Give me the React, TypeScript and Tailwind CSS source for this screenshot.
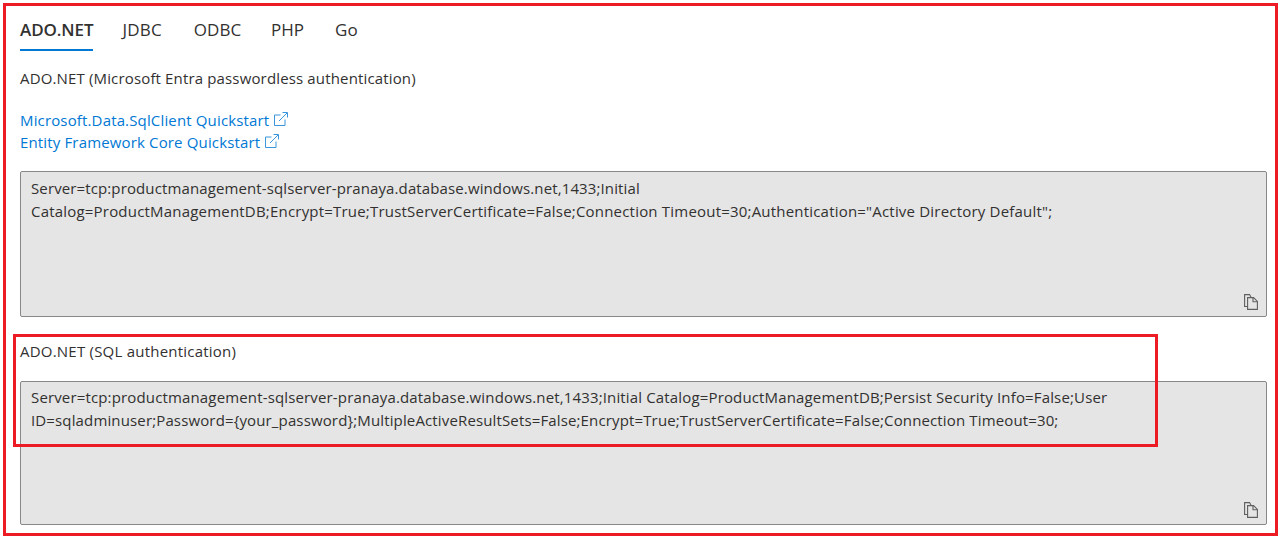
const font = "font-['Open_Sans','Noto_Sans',sans-serif]";

function ExternalIcon() {
  return (
    <svg width="14" height="14" viewBox="0 0 14 14" fill="none" stroke="#3a96dd" strokeWidth="1" className="ml-[5px] mb-[4px] shrink-0">
      <path d="M6.5 3H.5v10.5h10.5V7.5" />
      <path d="M5 9 13 1M8.5.5h5v5" />
    </svg>
  );
}

function CopyIcon() {
  return (
    <svg width="14" height="16" viewBox="0 0 14 16" fill="none" stroke="#5f5f5f" strokeWidth="1.1">
      <path d="M3.6 12.5H.6V.6h5l1.4 2.6" />
      <path d="M3.6 3.6h6l3.8 3.8v8H3.6z" />
      <path d="M9 3.6v4.2h4.4" />
    </svg>
  );
}

function CodeBox({ className, lines }: { className: string; lines: { text: string; tracking: string }[] }) {
  return (
    <div className={`mr-[13px] flex flex-col justify-between rounded-[2px] border border-[#8a8886] bg-[#e5e5e5] pl-[10px] pr-[8px] pb-[6px] ${className}`}>
      <div className="whitespace-nowrap text-[15px] leading-[23px] text-[#323130]">
        {lines.map((l) => (
          <div key={l.text} className={l.tracking}>{l.text}</div>
        ))}
      </div>
      <div className="flex justify-end">
        <CopyIcon />
      </div>
    </div>
  );
}

export default function App() {
  return (
    <div className={`relative h-[537px] w-[1280px] overflow-hidden bg-white ${font} text-[#323130]`}>
      <div className="flex flex-col pl-[20px] pt-[18px]">
        <div className="flex h-[33px] text-[17px] leading-[24px]">
          <div className="h-[33px] border-b-[2px] border-[#0078d4] font-semibold tracking-[-0.1px]">ADO.NET</div>
          <div className="ml-[29px] tracking-[0.2px]">JDBC</div>
          <div className="ml-[32px]">ODBC</div>
          <div className="ml-[30px]">PHP</div>
          <div className="ml-[31px]">Go</div>
        </div>
        <div className="mt-[17px] text-[15px] leading-[20px] tracking-[0.15px]">ADO.NET (Microsoft Entra passwordless authentication)</div>
        <div className="mt-[21px] flex flex-col text-[15px] leading-[23px] tracking-[0.15px] text-[#0078d4]">
          <div className="flex items-center">Microsoft.Data.SqlClient Quickstart<ExternalIcon /></div>
          <div className="-mt-[1px] flex items-center">Entity Framework Core Quickstart<ExternalIcon /></div>
        </div>
        <CodeBox
          className="mt-[17px] h-[146px] pt-[5px]"
          lines={[
            { text: "Server=tcp:productmanagement-sqlserver-pranaya.database.windows.net,1433;Initial", tracking: "tracking-[0.12px]" },
            { text: 'Catalog=ProductManagementDB;Encrypt=True;TrustServerCertificate=False;Connection Timeout=30;Authentication="Active Directory Default";', tracking: "tracking-[0.2px]" },
          ]}
        />
        <div className="mt-[24px] text-[15px] leading-[20px] tracking-[0.22px]">ADO.NET (SQL authentication)</div>
        <CodeBox
          className="mt-[20px] h-[144px] pt-[4px]"
          lines={[
            { text: "Server=tcp:productmanagement-sqlserver-pranaya.database.windows.net,1433;Initial Catalog=ProductManagementDB;Persist Security Info=False;User", tracking: "tracking-[0.15px]" },
            { text: "ID=sqladminuser;Password={your_password};MultipleActiveResultSets=False;Encrypt=True;TrustServerCertificate=False;Connection Timeout=30;", tracking: "tracking-[0.14px]" },
          ]}
        />
      </div>
      <div className="pointer-events-none absolute left-[3px] top-[3px] h-[533px] w-[1275px] border-[3px] border-[#ed1c24]" />
      <div className="pointer-events-none absolute left-[13px] top-[334px] h-[113px] w-[1145px] border-[3px] border-[#ed1c24]" />
    </div>
  );
}
